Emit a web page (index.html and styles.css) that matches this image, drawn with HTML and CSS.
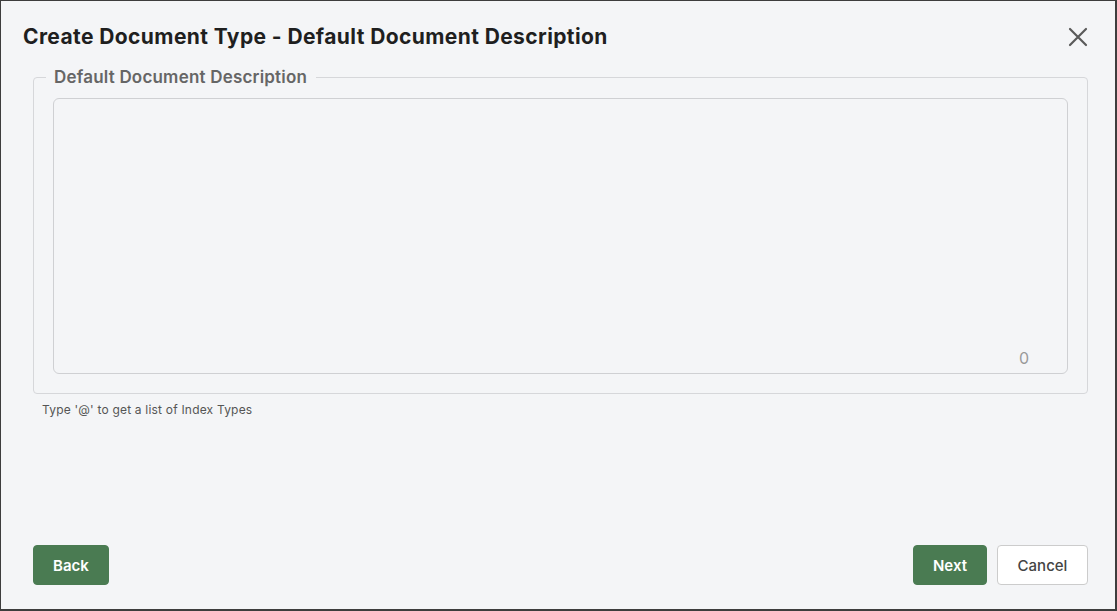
FILE: index.html
```html
<!DOCTYPE html>
<html lang="en">
<head>
    <meta charset="UTF-8">
    <meta name="viewport" content="width=device-width, initial-scale=1.0">
    <title>Create Document Type</title>
    <link rel="stylesheet" href="styles.css">
</head>
<body>
    <div class="dialog">
        <div class="header">
            <h1>Create Document Type - Default Document Description</h1>
            <button class="close" aria-label="Close">
                <svg width="20" height="20" viewBox="0 0 20 20">
                    <path d="M2 2 L18 18 M18 2 L2 18" stroke="#5a5a5a" stroke-width="2.2" stroke-linecap="round" fill="none"/>
                </svg>
            </button>
        </div>

        <fieldset class="field">
            <legend>Default Document Description</legend>
            <div class="area">
                <textarea></textarea>
                <span class="counter">0</span>
            </div>
        </fieldset>
        <p class="hint">Type '@' to get a list of Index Types</p>

        <div class="footer">
            <button class="button">Back</button>
            <div class="actions">
                <button class="button">Next</button>
                <button class="button secondary">Cancel</button>
            </div>
        </div>
    </div>
</body>
</html>
```

FILE: styles.css
```css
/* Dialog: create document type */
body {
    font-family: Inter, "Noto Sans", sans-serif;
    margin: 0;
    padding: 0;
    background-color: #f4f5f7;
}

.dialog {
    box-sizing: border-box;
    height: 611px;
    border: solid #3d3d3d;
    border-width: 1px 2px 2px 1px;
    background-color: #f4f5f7;
    padding: 0 27px 24px 32px;
    display: flex;
    flex-direction: column;
}

.header {
    display: flex;
    align-items: center;
    justify-content: space-between;
    padding-top: 24px;
    margin-left: -10px;
}

.header h1 {
    margin: 0;
    font-size: 21px;
    line-height: 24px;
    font-weight: 700;
    color: #1f1f1f;
    letter-spacing: 0.4px;
}

.close {
    background: none;
    border: none;
    padding: 0;
    width: 20px;
    height: 20px;
    cursor: pointer;
}

.field {
    margin: 18px 0 0 0;
    padding: 11px 19px 19px 19px;
    border: 1px solid #d6d7da;
    border-radius: 4px;
}

.field legend {
    margin-left: -7px;
    padding: 0 9px 0 8px;
    font-size: 17px;
    line-height: 20px;
    font-weight: 600;
    color: #666666;
    letter-spacing: 0.2px;
}

.area {
    position: relative;
}

.area textarea {
    display: block;
    box-sizing: border-box;
    width: 100%;
    height: 276px;
    resize: none;
    border: 1px solid #cfd0d3;
    border-radius: 6px;
    background-color: #f4f5f7;
    font-family: inherit;
    font-size: 14px;
    padding: 10px;
}

.counter {
    position: absolute;
    right: 39px;
    bottom: 6px;
    font-size: 16px;
    color: #9a9a9a;
}

.hint {
    margin: 8px 0 0 9px;
    font-size: 12px;
    line-height: 15px;
    color: #555555;
    letter-spacing: 0.2px;
}

.footer {
    margin-top: auto;
    display: flex;
    justify-content: space-between;
    align-items: center;
}

.actions {
    display: flex;
    gap: 10px;
}

.button {
    box-sizing: border-box;
    height: 40px;
    padding: 0 19px;
    border: 1px solid #4a7b52;
    border-radius: 4px;
    background-color: #4a7b52;
    color: white;
    font-family: inherit;
    font-size: 15px;
    font-weight: 600;
    cursor: pointer;
}

.button.secondary {
    width: 91px;
    padding: 0;
    background-color: white;
    border-color: #cccccc;
    color: #444444;
    font-weight: 500;
}
```
